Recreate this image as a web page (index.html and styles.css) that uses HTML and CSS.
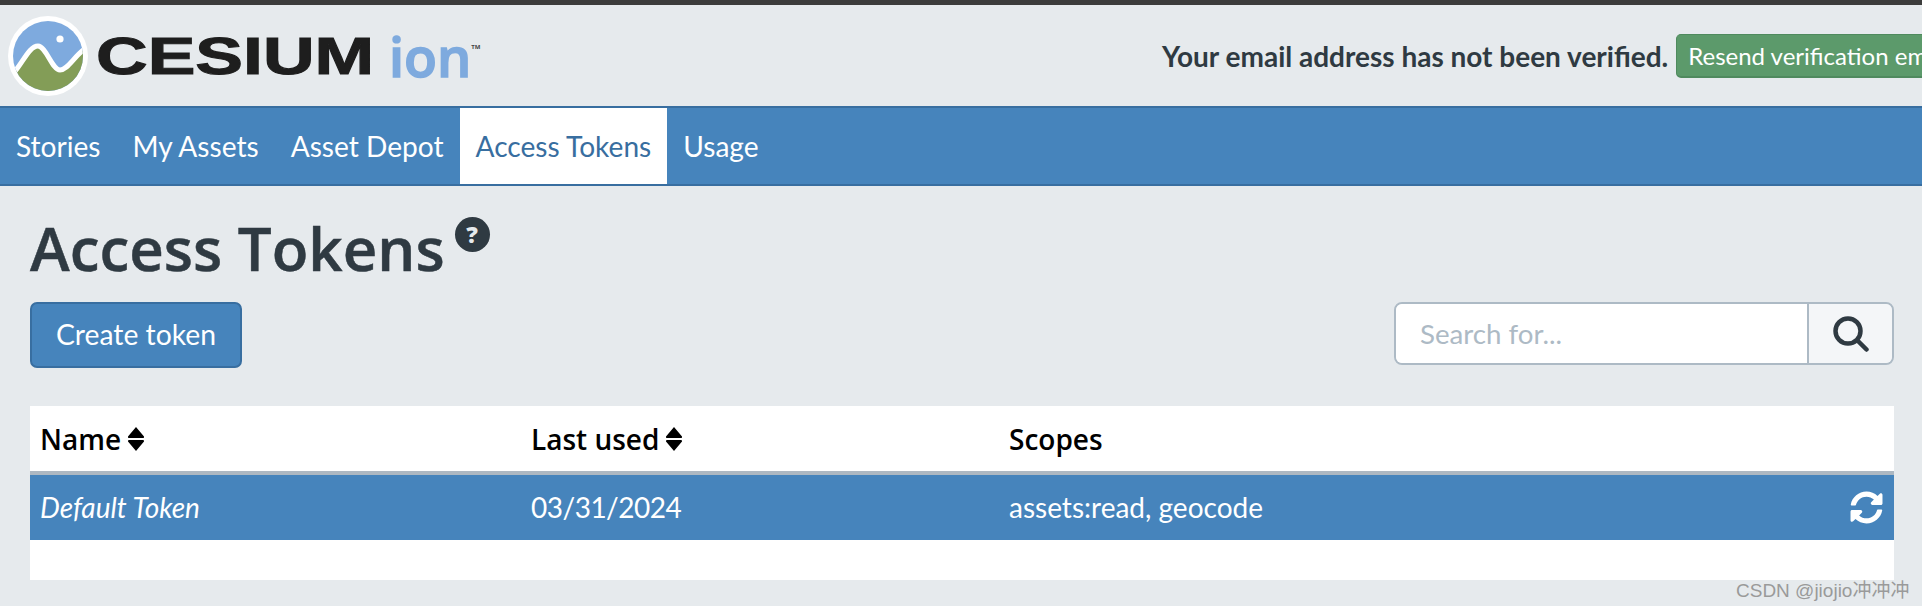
FILE: index.html
```html
<!DOCTYPE html>
<html lang="en">
<head>
  <meta charset="UTF-8" />
  <meta name="viewport" content="width=device-width, initial-scale=1.0"/>
  <title>Access Tokens</title>
  <link rel="stylesheet" href="styles.css">
</head>
<body>
  <div class="topline"></div>

  <header class="header">
    <a class="logo">
      <svg class="logo-mark" viewBox="0 0 80 80" width="80" height="80">
        <defs><clipPath id="inner"><circle cx="40" cy="40" r="35"/></clipPath></defs>
        <circle cx="40" cy="40" r="40" fill="#fff"/>
        <g clip-path="url(#inner)">
          <rect width="80" height="80" fill="#7eaade"/>
          <path d="M0 62 L8 54 C16 44 22 30 30 30 C38 30 44 54 52 54 C60 54 66 40 78 32 L80 80 L0 80 Z" fill="#839d57" stroke="#fff" stroke-width="5"/>
          <circle cx="52" cy="23" r="3.6" fill="#fff"/>
        </g>
      </svg>
      <span class="logo-word">CESIUM</span>
      <span class="logo-ion">ion</span>
      <span class="logo-tm">TM</span>
    </a>
    <div class="notice">
      <span class="notice-text">Your email address has not been verified.</span>
      <button class="resend-btn">Resend verification email</button>
    </div>
  </header>

  <nav class="nav">
    <a class="nav-item">Stories</a>
    <a class="nav-item">My Assets</a>
    <a class="nav-item">Asset Depot</a>
    <a class="nav-item active">Access Tokens</a>
    <a class="nav-item">Usage</a>
  </nav>

  <main class="content">
    <div class="title-row">
      <h1>Access Tokens</h1>
      <span class="help">?</span>
    </div>

    <div class="toolbar">
      <button class="create-btn">Create token</button>
      <div class="search">
        <input class="search-input" placeholder="Search for..." />
        <button class="search-btn">
          <svg viewBox="0 0 36 36" width="36" height="36" fill="none" stroke="#2f3a42" stroke-width="4.5" stroke-linecap="round">
            <circle cx="15" cy="15" r="12.5"/>
            <path d="M24.5 24.5 L33.5 33.5"/>
          </svg>
        </button>
      </div>
    </div>

    <div class="table">
      <div class="row head">
        <div class="cell name">Name
          <svg class="sort" viewBox="0 0 18 26" width="18" height="26"><path d="M9 1 L17 10.5 Q17.500 12 16 12 L2 12 Q.5 12 1 10.5 Z M9 25 L17 15.500 Q17.500 14 16 14 L2 14 Q.5 14 1 15.500 Z" fill="#000"/></svg>
        </div>
        <div class="cell used">Last used
          <svg class="sort" viewBox="0 0 18 26" width="18" height="26"><path d="M9 1 L17 10.5 Q17.500 12 16 12 L2 12 Q.5 12 1 10.5 Z M9 25 L17 15.500 Q17.500 14 16 14 L2 14 Q.5 14 1 15.500 Z" fill="#000"/></svg>
        </div>
        <div class="cell scopes">Scopes</div>
      </div>
      <div class="row selected">
        <div class="cell name"><em>Default Token</em></div>
        <div class="cell used date">03/31/2024</div>
        <div class="cell scopes">assets:read, geocode</div>
        <svg class="refresh" viewBox="0 0 512 512" width="33" height="33"><path fill="#fff" d="M370.72 133.28C339.458 104.008 298.888 87.962 255.848 88c-77.458.068-144.328 53.178-162.791 126.85-1.344 5.363-6.122 9.15-11.651 9.15H24.103c-7.498 0-13.194-6.807-11.807-14.176C33.933 94.924 134.813 8 256 8c66.448 0 126.791 26.136 171.315 68.685L463.03 40.97C478.149 25.851 504 36.559 504 57.941V192c0 13.255-10.745 24-24 24H345.941c-21.382 0-32.09-25.851-16.971-40.971l41.75-41.749zM32 296h134.059c21.382 0 32.09 25.851 16.971 40.971l-41.75 41.75c31.262 29.273 71.835 45.319 114.876 45.28 77.418-.07 144.315-53.144 162.787-126.849 1.344-5.363 6.122-9.15 11.651-9.15h57.304c7.498 0 13.194 6.807 11.807 14.176C478.067 417.076 377.187 504 256 504c-66.448 0-126.791-26.136-171.315-68.685L48.97 471.03C33.851 486.149 8 475.441 8 454.059V320c0-13.255 10.745-24 24-24z"/></svg>
      </div>
      <div class="row empty"></div>
    </div>
  </main>

  <div class="watermark">CSDN @jiojio冲冲冲</div>
</body>
</html>
```

FILE: styles.css
```css
html, body {
  height: 100%;
}

body {
  margin: 0;
  background: #e6eaed;
  color: #2f3a42;
  font-family: 'Open Sans', sans-serif;
  overflow: hidden;
  position: relative;
}

.topline {
  height: 5px;
  background: #3c3c3c;
}

.header {
  height: 101px;
  display: flex;
  align-items: center;
  padding-left: 8px;
  box-sizing: border-box;
}

.logo {
  flex: 0 0 1154px;
  display: flex;
  align-items: center;
}

.logo-mark {
  flex: none;
}

.logo-word {
  margin-left: 8px;
  width: 276px;
  font-family: 'Liberation Sans', sans-serif;
  font-weight: 700;
  font-size: 52px;
  line-height: 60px;
  color: #1e1e1e;
  -webkit-text-stroke: 1px #1e1e1e;
  transform: scaleX(1.375);
  transform-origin: left center;
  white-space: nowrap;
}

.logo-ion {
  margin-left: 17px;
  font-family: 'Open Sans', sans-serif;
  font-weight: 600;
  font-size: 54px;
  line-height: 60px;
  color: #7eaade;
  -webkit-text-stroke: 1.5px #7eaade;
}

.logo-tm {
  align-self: flex-start;
  margin-top: 27px;
  font-size: 6px;
  font-weight: 700;
  color: #444;
}

.notice {
  flex: none;
  display: flex;
  align-items: center;
  gap: 8px;
}

.notice-text {
  font-family: Lato, sans-serif;
  font-weight: 700;
  font-size: 28px;
  white-space: nowrap;
}

.resend-btn {
  height: 44px;
  padding: 0 11px;
  background: #5c9a6b;
  border: 1px solid #4f8a5e;
  border-bottom-width: 2px;
  border-radius: 5px;
  color: #fff;
  font-family: Lato, sans-serif;
  font-size: 24px;
  white-space: nowrap;
}

.nav {
  display: flex;
  height: 76px;
  padding-left: 0;
  background: #4684bc;
  border-top: 2px solid #386ea0;
  border-bottom: 2px solid #386ea0;
}

.nav-item {
  display: flex;
  align-items: center;
  padding: 0 16px;
  color: #fff;
  font-family: Lato, sans-serif;
  font-size: 28.1px;
}

.nav-item.active {
  background: #fff;
  color: #386ea0;
}

.content {
  padding: 0 28px 0 30px;
}

.title-row {
  display: flex;
  align-items: flex-start;
  height: 116px;
}

h1 {
  margin: 27px 0 0;
  font-size: 60px;
  line-height: 70px;
  font-weight: 600;
  -webkit-text-stroke: 0.5px #2f3a42;
}

.help {
  width: 35px;
  height: 35px;
  margin: 31px 0 0 10px;
  border-radius: 50%;
  background: #2f3a42;
  color: #e6eaed;
  font-size: 23px;
  font-weight: 800;
  line-height: 35px;
  text-align: center;
}

.toolbar {
  display: flex;
  justify-content: space-between;
  align-items: flex-start;
}

.create-btn {
  width: 212px;
  height: 66px;
  padding: 0 0 2px;
  background: #4684bc;
  border: 2px solid #386ea0;
  border-radius: 7px;
  color: #fff;
  font-family: Lato, sans-serif;
  font-size: 28.3px;
}

.search {
  display: flex;
  width: 500px;
  height: 63px;
  box-sizing: border-box;
  border: 2px solid #adbac5;
  border-radius: 8px;
  overflow: hidden;
}

.search-input {
  flex: 1;
  min-width: 0;
  padding: 0 24px;
  border: none;
  outline: none;
  background: #fff;
  font-family: Lato, sans-serif;
  font-size: 27.7px;
}

.search-input::placeholder {
  color: #adbac5;
}

.search-btn {
  width: 85px;
  padding: 0;
  border: none;
  border-left: 2px solid #adbac5;
  background: #f4f6f8;
  display: flex;
  align-items: center;
  justify-content: center;
}

.table {
  margin-top: 38px;
  background: #fff;
}

.row {
  position: relative;
  display: flex;
  align-items: center;
  height: 65px;
  padding-left: 10px;
}

.row.head {
  height: 69px;
  box-sizing: border-box;
  border-bottom: 4px solid #adb8c2;
  color: #000;
  font-size: 28px;
  font-weight: 600;
}

.row.selected {
  box-sizing: border-box;
  padding-bottom: 2px;
  background: #4684bc;
  color: #fff;
  font-family: Lato, sans-serif;
  font-size: 28px;
}

.row.empty {
  height: 40px;
}

.cell {
  display: flex;
  align-items: center;
  gap: 6px;
  white-space: nowrap;
}

.cell.name {
  width: 491px;
}

.cell.used {
  width: 478px;
}

.cell.date {
  letter-spacing: -0.5px;
}

.refresh {
  position: absolute;
  right: 11px;
  top: 16px;
}

.watermark {
  position: absolute;
  left: 1736px;
  top: 575px;
  font-family: 'Liberation Sans', 'Noto Sans CJK SC', sans-serif;
  font-size: 19px;
  color: #9a9a9a;
  white-space: nowrap;
}
```
